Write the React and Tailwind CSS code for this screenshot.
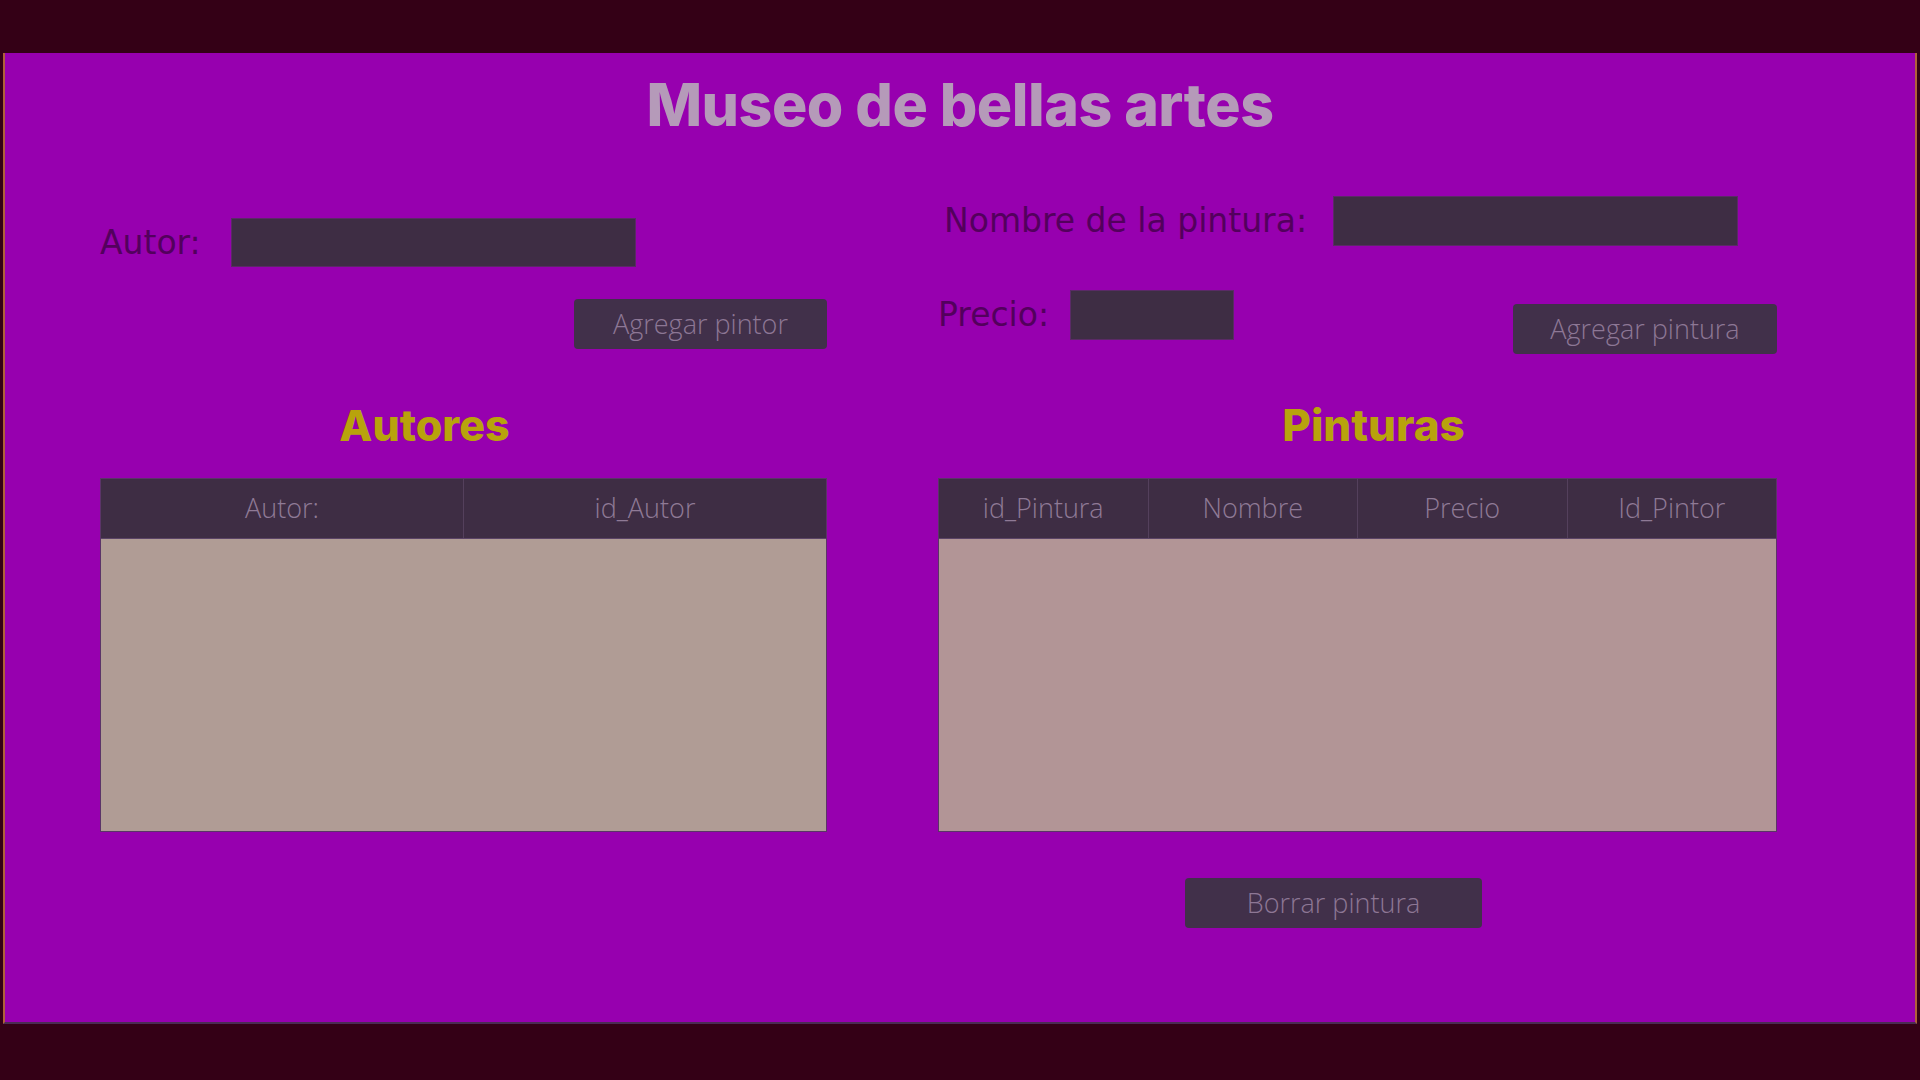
import React from 'react';

const titleFont = { fontFamily: 'Inter, "Noto Sans", sans-serif' };
const labelFont = { fontFamily: '"DejaVu Sans", "Noto Sans", sans-serif' };
const uiFont = { fontFamily: '"Open Sans", "Noto Sans", sans-serif' };

const Field = ({ className }) => (
  <div className={`bg-[#3e2d44] border border-[#5a2a66] ${className}`} />
);

const Button = ({ children, className }) => (
  <button
    style={uiFont}
    className={`bg-[#41304a] rounded-[4px] text-[#8d7795] text-[27px] font-light flex items-center justify-center ${className}`}
  >
    {children}
  </button>
);

const Table = ({ columns, body }) => (
  <div className="flex flex-col h-[354px] border border-[#5b3468]">
    <div className="flex h-[59px] bg-[#3e2d44]" style={uiFont}>
      {columns.map((c, i) => (
        <div
          key={c}
          className={`flex-1 flex items-center justify-center text-[27px] font-light text-[#8f7a96] ${
            i > 0 ? 'border-l border-[#54405c]' : ''
          }`}
        >
          {c}
        </div>
      ))}
    </div>
    <div className={`flex-1 border-t border-[#5b4466] ${body}`} />
  </div>
);

const App = () => {
  return (
    <div className="w-[1920px] h-[1080px] bg-[#340016] flex flex-col overflow-hidden">
      <div className="h-[53px]" />
      <div className="flex-1 bg-[#9700af] ml-[3px] mr-[3px] border-l-2 border-r-2 border-[#b0603a] border-b-2 border-b-[#4a2c52] flex flex-col">
        {/* titulo */}
        <h1
          style={titleFont}
          className="text-center text-[59px] font-extrabold tracking-[-0.5px] text-[#b59ab9] mt-[20px] leading-[64px]"
        >
          Museo de bellas artes
        </h1>

        <div className="flex pl-[95px] mt-[59px]">
          {/* formulario autores */}
          <div className="w-[727px] flex flex-col" style={labelFont}>
            <div className="flex items-center h-[49px] mt-[22px]">
              <span className="text-[33px] text-[#53005d] w-[131px]">Autor:</span>
              <Field className="w-[405px] h-[49px]" />
            </div>
            <div className="flex justify-end mt-[32px]">
              <Button className="w-[253px] h-[50px]">Agregar pintor</Button>
            </div>
          </div>

          {/* formulario pinturas */}
          <div className="w-[839px] ml-[111px] flex flex-col" style={labelFont}>
            <div className="flex items-center h-[50px]">
              <span className="text-[33px] text-[#53005d] ml-[6px] w-[389px] whitespace-nowrap">
                Nombre de la pintura:
              </span>
              <Field className="w-[405px] h-[50px]" />
            </div>
            <div className="flex items-start mt-[44px]">
              <span className="text-[33px] text-[#53005d] w-[132px] h-[50px] flex items-center">
                Precio:
              </span>
              <Field className="w-[164px] h-[50px]" />
              <Button className="w-[264px] h-[50px] ml-auto mt-[14px]">Agregar pintura</Button>
            </div>
          </div>
        </div>

        {/* tablas */}
        <div className="flex pl-[95px] mt-[44px]">
          <div className="w-[727px] flex flex-col">
            <h2
              style={titleFont}
              className="text-[43px] font-extrabold text-[#b8a30c] text-center pr-[78px] leading-[54px]"
            >
              Autores
            </h2>
            <div className="mt-[26px]">
              <Table columns={['Autor:', 'id_Autor']} body="bg-[#b09c95]" />
            </div>
          </div>
          <div className="w-[839px] ml-[111px] flex flex-col">
            <h2
              style={titleFont}
              className="text-[44px] font-extrabold text-[#b8a30c] text-center pl-[32px] leading-[54px]"
            >
              Pinturas
            </h2>
            <div className="mt-[26px]">
              <Table columns={['id_Pintura', 'Nombre', 'Precio', 'Id_Pintor']} body="bg-[#b29596]" />
            </div>
            <div className="mt-[46px] ml-[247px]">
              <Button className="w-[297px] h-[50px]">Borrar pintura</Button>
            </div>
          </div>
        </div>
      </div>
      <div className="h-[56px]" />
    </div>
  );
};

export default App;
